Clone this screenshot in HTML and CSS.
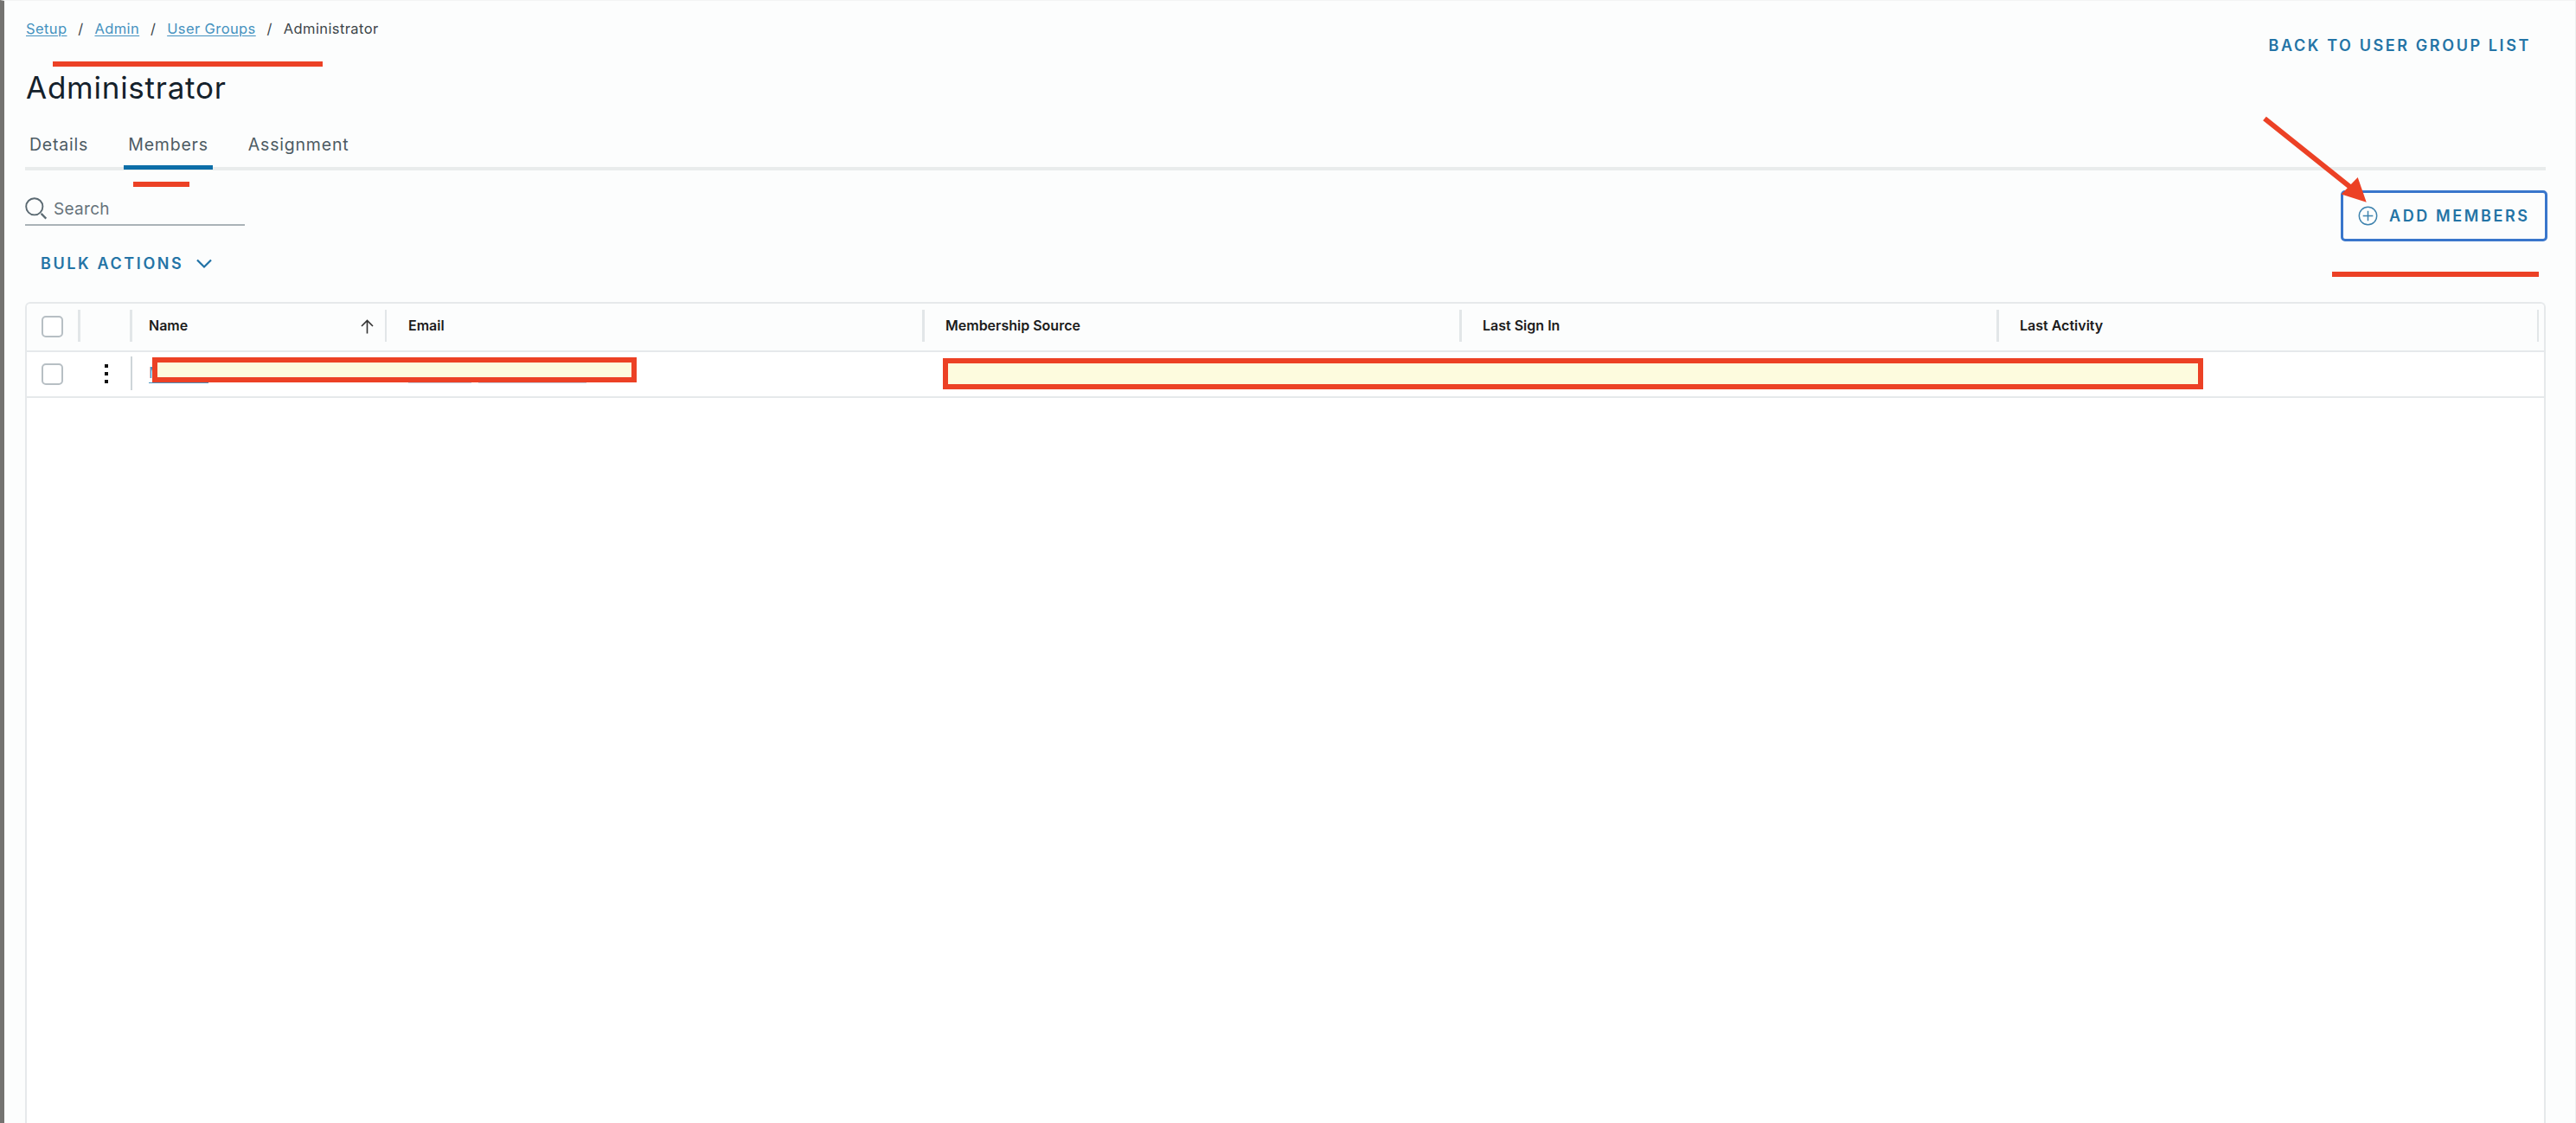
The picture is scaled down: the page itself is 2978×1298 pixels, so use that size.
FILE: index.html
```html
<!DOCTYPE html>
<html lang="en">
<head>
  <meta charset="UTF-8" />
  <meta name="viewport" content="width=device-width, initial-scale=1.0"/>
  <title>Administrator</title>
  <link rel="stylesheet" href="styles.css">
</head>
<body>
  <main class="page">
    <header class="page-header">
      <div>
        <nav class="breadcrumb">
          <a href="#">Setup</a><span class="sep">/</span>
          <a href="#">Admin</a><span class="sep">/</span>
          <a href="#">User Groups</a><span class="sep">/</span>
          <span>Administrator</span>
        </nav>
        <h1>Administrator</h1>
      </div>
      <a class="btn-link back-link" href="#">BACK TO USER GROUP LIST</a>
    </header>

    <nav class="tabs">
      <a class="tab" href="#">Details</a>
      <a class="tab active" href="#">Members</a>
      <a class="tab" href="#">Assignment</a>
    </nav>

    <div class="toolbar">
      <div class="search">
        <svg width="26" height="26" viewBox="0 0 26 26" fill="none" stroke="#5b6a72" stroke-width="1.9">
          <circle cx="10.8" cy="10.8" r="9.6"/>
          <path d="M18.6 18.9 L24.3 24.6" stroke-width="2.2"/>
        </svg>
        <span>Search</span>
      </div>
      <button class="add-btn">
        <svg width="23" height="23" viewBox="0 0 23 23" fill="none" stroke="#3e83ae" stroke-width="1.5">
          <circle cx="11.5" cy="11.5" r="10.2"/>
          <path d="M11.5 5.7 V17.3 M5.7 11.5 H17.3"/>
        </svg>
        <span class="btn-link">ADD MEMBERS</span>
      </button>
    </div>

    <div class="bulk">
      <span class="btn-link">BULK ACTIONS</span>
      <svg width="18" height="12" viewBox="0 0 18 12" fill="none" stroke="#1f71a5" stroke-width="2.2">
        <path d="M1 1.5 L9 9.5 L17 1.5"/>
      </svg>
    </div>

    <section class="grid">
      <div class="row head">
        <div class="cell check"><span class="checkbox"></span></div>
        <div class="cell menu"></div>
        <div class="cell name">
          <span>Name</span>
          <svg width="15" height="17" viewBox="0 0 15 17" fill="none" stroke="#333" stroke-width="1.6">
            <path d="M7.5 16.5 V1.5 M1 8 L7.5 1.5 L14 8"/>
          </svg>
        </div>
        <div class="cell email"><span>Email</span></div>
        <div class="cell source"><span>Membership Source</span></div>
        <div class="cell signin"><span>Last Sign In</span></div>
        <div class="cell activity"><span>Last Activity</span></div>
      </div>
      <div class="row data">
        <div class="cell check"><span class="checkbox"></span></div>
        <div class="cell menu">
          <span class="dots"><i></i><i></i><i></i></span>
        </div>
        <div class="cell name"><a class="member" href="#">M</a></div>
        <div class="cell email"><span class="mail-line"></span><span class="mail-line long"></span></div>
      </div>
    </section>
  </main>

  <!-- markup drawn over the page -->
  <div class="mark mark-title"></div>
  <div class="mark mark-tab"></div>
  <div class="mark mark-add"></div>
  <div class="mask mask-user"></div>
  <div class="mask mask-details"></div>
  <svg class="arrow" width="130" height="110" viewBox="0 0 130 110">
    <path d="M8 7 L108 87" stroke="#ec4125" stroke-width="6"/>
    <path d="M125.7 103.7 L115.7 75 L96.7 94.5 Z" fill="#ec4125"/>
  </svg>
</body>
</html>
```

FILE: styles.css
```css
* {
  box-sizing: border-box;
}

body {
  margin: 0;
  height: 1298px;
  position: relative;
  overflow: hidden;
  font-family: Inter, "Liberation Sans", sans-serif;
  background-color: #fcfdfd;
  color: #45535b;
}

.page {
  height: 100%;
  display: flex;
  flex-direction: column;
  padding: 0 34px 0 24px;
  border-left: 5px solid #747371;
  border-right: 1px solid #eceeee;
  border-top: 1px solid #f3f4f4;
}

.page-header {
  height: 143px;
  display: flex;
  justify-content: space-between;
}

.breadcrumb {
  display: flex;
  align-items: center;
  height: 24px;
  margin: 20px 0 0 1px;
  font-size: 16.5px;
  letter-spacing: 0.4px;
  white-space: nowrap;
  color: #3c454a;
}

.breadcrumb a {
  color: #4592bf;
  text-underline-offset: 2px;
}

.sep {
  width: 32px;
  text-align: center;
}

h1 {
  margin: 33px 0 0 1px;
  font-size: 35px;
  line-height: 46px;
  font-weight: 400;
  letter-spacing: 0.75px;
  color: #14212b;
}

.btn-link {
  font-size: 18px;
  line-height: 24px;
  font-weight: 600;
  letter-spacing: 2.6px;
  color: #2474a6;
  text-decoration: none;
  white-space: nowrap;
}

.back-link {
  margin: 40px 17px 0 0;
}

.tabs {
  display: flex;
  height: 53px;
  border-bottom: 4px solid #e9ecec;
}

.tab {
  height: 52px;
  padding: 11px 5px 0;
  margin-right: 36px;
  font-size: 19.5px;
  line-height: 24px;
  letter-spacing: 0.8px;
  color: #4d5b63;
  text-decoration: none;
}

.tab.active {
  border-bottom: 5px solid #0c6ea8;
}

.toolbar {
  display: flex;
  justify-content: space-between;
  height: 83px;
}

.search {
  display: flex;
  align-items: flex-start;
  gap: 7px;
  width: 254px;
  height: 64px;
  padding-top: 31px;
  border-bottom: 2px solid #aab3b7;
  font-size: 19px;
  line-height: 28px;
  letter-spacing: 0.3px;
  color: #66737b;
}

.add-btn {
  display: flex;
  align-items: center;
  gap: 13px;
  width: 239px;
  height: 59px;
  margin: 23px -2px 0 0;
  padding: 0 0 0 17px;
  background: none;
  border: 3px solid #3976cb;
  border-radius: 5px;
  font-family: inherit;
}

.bulk {
  display: flex;
  align-items: center;
  gap: 15px;
  height: 49px;
  padding-left: 18px;
}

.grid {
  flex: 1;
  margin-top: 20px;
  border: 2px solid #e6e9eb;
  border-bottom: none;
  border-radius: 6px 6px 0 0;
  background-color: #fff;
}

.row {
  display: flex;
  border-bottom: 2px solid #e6e9eb;
}

.head {
  height: 56px;
  background-color: #fcfdfd;
  border-radius: 5px 5px 0 0;
  font-size: 16px;
  font-weight: 600;
  color: #1b1b1b;
}

.data {
  height: 53px;
}

.cell {
  position: relative;
  display: flex;
  align-items: center;
  white-space: nowrap;
}

.head .cell {
  padding-bottom: 1px;
}

.head .cell > span:not(.checkbox) {
  padding-bottom: 3px;
}

.head .cell::after {
  content: "";
  position: absolute;
  right: 0;
  top: 7px;
  width: 3px;
  height: 37px;
  background-color: #e2e6e8;
}

.cell.check {
  width: 62px;
  padding-left: 17px;
}

.cell.menu {
  width: 60px;
  padding-left: 28px;
}

.data .menu::after {
  content: "";
  position: absolute;
  right: 0;
  top: 5px;
  width: 2px;
  height: 39px;
  background-color: #ced5d9;
}

.cell.name {
  width: 294px;
  padding-left: 19px;
  padding-right: 15px;
  justify-content: space-between;
}

.head .name::after {
  width: 2px;
}

.cell.email {
  width: 622px;
  padding-left: 25px;
}

.cell.source,
.cell.signin {
  width: 621px;
  padding-left: 24px;
}

.cell.activity {
  width: 624px;
  padding-left: 24px;
}

.head .activity::after {
  width: 2px;
}

.data .name,
.data .email {
  align-items: flex-start;
}

.checkbox {
  width: 25px;
  height: 25px;
  border: 2px solid #b7bfc4;
  border-radius: 5px;
  background-color: #fff;
}

.data .checkbox,
.dots {
  margin-bottom: 1px;
}

.dots {
  display: flex;
  flex-direction: column;
  gap: 5px;
}

.dots i {
  width: 4px;
  height: 4px;
  background-color: #111;
}

.member {
  width: 69px;
  height: 36px;
  padding-top: 14px;
  border-bottom: 1px solid #4592bf;
  font-size: 17px;
  line-height: 21px;
  color: #4592bf;
  text-decoration: none;
}

.mail-line {
  width: 73px;
  height: 1px;
  margin: 35px 8px 0 0;
  background-color: #c3cfdf;
}

.mail-line.long {
  width: 125px;
}

.mark,
.mask,
.arrow {
  position: absolute;
}

.mark {
  height: 6px;
  background-color: #ec4125;
}

.mark-title {
  left: 61px;
  top: 71px;
  width: 312px;
}

.mark-tab {
  left: 154px;
  top: 210px;
  width: 65px;
}

.mark-add {
  left: 2696px;
  top: 314px;
  width: 239px;
}

.mask {
  border: 6px solid #ec4125;
  background-color: #fdfbde;
}

.mask-user {
  left: 176px;
  top: 413px;
  width: 560px;
  height: 29px;
}

.mask-details {
  left: 1090px;
  top: 414px;
  width: 1457px;
  height: 36px;
}

.arrow {
  left: 2610px;
  top: 130px;
}
```
